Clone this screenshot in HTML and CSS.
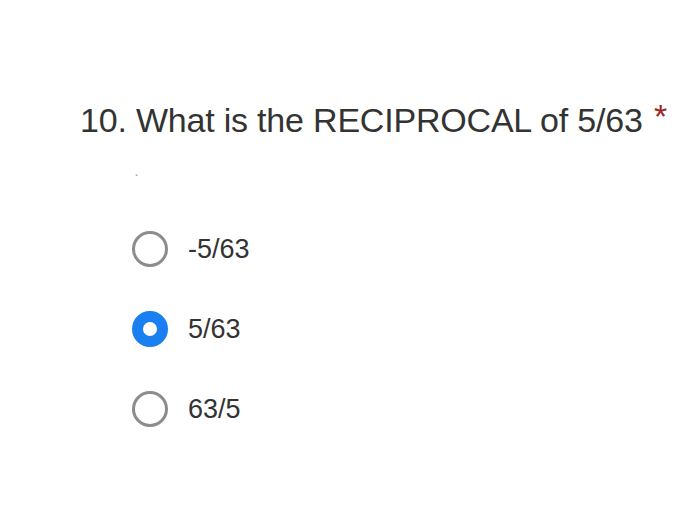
FILE: index.html
```html
<!DOCTYPE html>
<html>
<head>
<meta charset="utf-8">
<link rel="stylesheet" href="styles.css">
</head>
<body>
<div class="question">
  <div class="title"><span class="num">10.</span> What is the RECIPROCAL of 5/63 <span class="req">*</span></div>
  <div class="mark">`</div>
  <div class="options">
    <label class="opt"><span class="radio"></span><span class="txt">-5/63</span></label>
    <label class="opt"><span class="radio checked"></span><span class="txt">5/63</span></label>
    <label class="opt"><span class="radio"></span><span class="txt">63/5</span></label>
  </div>
</div>
</body>
</html>
```
FILE: styles.css
```css
html, body {
  margin: 0;
  padding: 0;
  background: #fff;
}
body {
  width: 689px;
  height: 517px;
  overflow: hidden;
  font-family: "Liberation Sans", Arial, sans-serif;
  color: #333;
}
.question {
  padding: 98px 0 0 80px;
}
.title {
  font-size: 34px;
  line-height: 44px;
  height: 44px;
  white-space: nowrap;
  letter-spacing: -0.2px;
}
.req {
  color: #a3241c;
  font-size: 34px;
  display: inline-block;
  line-height: 0;
  vertical-align: 4px;
  margin-left: 2px;
}
.mark {
  height: 89px;
  padding-left: 55px;
  font-size: 10px;
  line-height: 76px;
  color: #456;
}
.options {
  display: flex;
  flex-direction: column;
  gap: 44px;
  padding-left: 52px;
}
.opt {
  display: flex;
  align-items: center;
  gap: 20px;
  height: 36px;
}
.radio {
  box-sizing: border-box;
  width: 36px;
  height: 36px;
  border-radius: 50%;
  border: 3px solid #8c8c8c;
  background: #fff;
}
.radio.checked {
  border: 11.5px solid #1a7ff0;
}
.txt {
  font-size: 27px;
  color: #333;
}
```
